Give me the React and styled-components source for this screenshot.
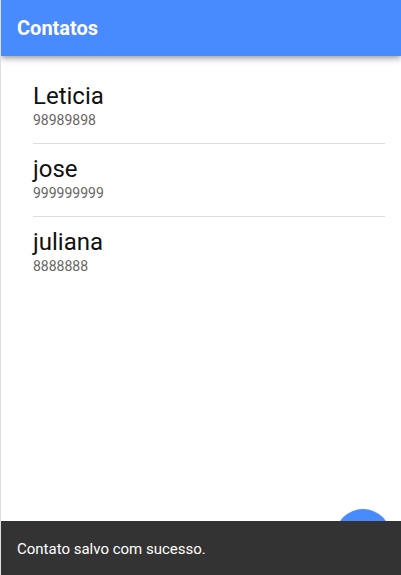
import React from "react";
import styled, { createGlobalStyle } from "styled-components";

const GlobalStyle = createGlobalStyle`
  html, body {
    margin: 0;
    padding: 0;
    height: 100%;
    background: #fff;
  }
  #root {
    height: 100%;
  }
  * {
    box-sizing: border-box;
  }
`;

const StyledPage = styled.div`
  position: relative;
  height: 575px;
  overflow: hidden;
  border-left: 1px solid #dedede;
  font-family: Roboto, "Noto Sans", sans-serif;
  background: #fff;
`;

const StyledHeader = styled.header`
  height: 56px;
  display: flex;
  align-items: center;
  padding: 0 16px;
  background: #488aff;
  box-shadow: 0 2px 4px -1px rgba(0, 0, 0, 0.2), 0 4px 5px 0 rgba(0, 0, 0, 0.14),
    0 1px 10px 0 rgba(0, 0, 0, 0.12);
  position: relative;
  z-index: 2;
`;

const StyledTitle = styled.h1`
  margin: 0;
  color: #fff;
  font-size: 20px;
  font-weight: 700;
`;

const StyledList = styled.ul`
  list-style: none;
  margin: 15px 16px 0 16px;
  padding: 0;
`;

const StyledItem = styled.li`
  padding-left: 16px;
`;

const StyledInner = styled.div`
  padding: 9px 8px 13px 0;
  border-bottom: ${(p) => (p.$last ? "none" : "1px solid #dedede")};
`;

const StyledName = styled.h2`
  margin: 2px 0;
  font-size: 24px;
  font-weight: 400;
  line-height: 28px;
  color: #111;
`;

const StyledPhone = styled.p`
  margin: 0 0 2px;
  font-size: 14px;
  line-height: 16px;
  color: #666;
`;

const StyledFab = styled.button`
  position: absolute;
  right: 10px;
  bottom: 10px;
  width: 56px;
  height: 56px;
  border: none;
  border-radius: 50%;
  background: #488aff;
  box-shadow: 0 4px 6px rgba(0, 0, 0, 0.2);
`;

const StyledToast = styled.div`
  position: absolute;
  left: 0;
  right: 0;
  bottom: 0;
  height: 54px;
  padding: 19px 16px 17px;
  background: #333;
  color: #fff;
  font-size: 15px;
  line-height: 18px;
  z-index: 3;
`;

const contacts = [
  { name: "Leticia", phone: "98989898" },
  { name: "jose", phone: "999999999" },
  { name: "juliana", phone: "8888888" },
];

export default function App() {
  return (
    <>
      <GlobalStyle />
      <StyledPage>
        <StyledHeader>
          <StyledTitle>Contatos</StyledTitle>
        </StyledHeader>
        <StyledList>
          {contacts.map((c, i) => (
            <StyledItem key={c.name}>
              <StyledInner $last={i === contacts.length - 1}>
                <StyledName>{c.name}</StyledName>
                <StyledPhone>{c.phone}</StyledPhone>
              </StyledInner>
            </StyledItem>
          ))}
        </StyledList>
        <StyledFab aria-label="Adicionar" />
        <StyledToast>Contato salvo com sucesso.</StyledToast>
      </StyledPage>
    </>
  );
}
